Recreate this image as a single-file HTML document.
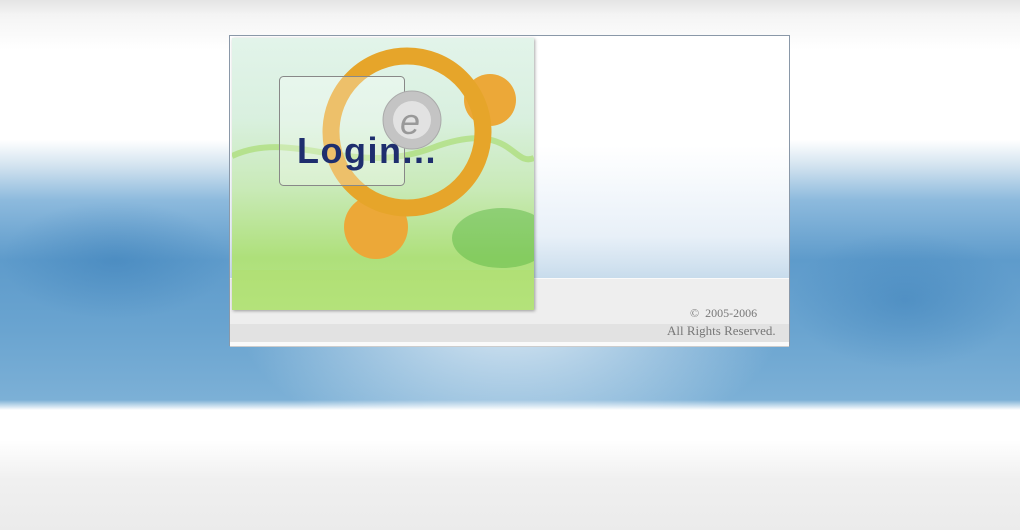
<!DOCTYPE html>
<html><head><style>
body{margin:0;width:1020px;height:530px;overflow:hidden;position:relative;font-family:"Liberation Serif",serif;
background:linear-gradient(180deg,#e4e4e4 0,#f4f4f4 15px,#fff 50px,#fff 140px,#d4e4f0 165px,#8dbadd 200px,#5e9bcb 260px,#6aa4d0 330px,#7cb0d6 400px,#fff 410px,#fff 440px,#f0f0f0 480px,#ebebeb 530px);}
.glow{position:absolute;left:230px;top:150px;width:560px;height:260px;background:radial-gradient(ellipse at 50% 60%,rgba(255,255,255,.8),rgba(255,255,255,0) 70%);}
.glowl{position:absolute;left:0;top:200px;width:230px;height:120px;background:radial-gradient(ellipse,rgba(50,120,180,.4),rgba(50,120,180,0) 70%);}
.glowr{position:absolute;left:790px;top:230px;width:230px;height:140px;background:radial-gradient(ellipse,rgba(50,120,180,.4),rgba(50,120,180,0) 70%);}
.panel{position:absolute;left:229px;top:35px;width:559px;height:310px;border:1px solid #8a98a8;border-bottom:none;
background:linear-gradient(180deg,#fff 0,#fff 110px,#e8f0f8 200px,#c8dcec 242px);}
.bar1{position:absolute;left:0;top:242px;width:559px;height:46px;background:#eeeeee;border-top:1px solid #fafafa}
.bar2{position:absolute;left:0;top:288px;width:559px;height:18px;background:#e2e2e2}
.bar3{position:absolute;left:0;top:306px;width:559px;height:4px;background:#fafafa;border-bottom:1px solid #ccc}
.img{position:absolute;left:2px;top:2px;width:302px;height:272px;overflow:hidden;box-shadow:1px 1px 3px rgba(0,0,0,.35);
background:linear-gradient(180deg,#e2f4ea 0,#d9f0df 80px,#c9eab8 150px,#aee07a 220px,#b8e68a 272px);}
.t1{position:absolute;left:460px;top:270px;font-size:12px;color:#777}
.t2{position:absolute;left:437px;top:287px;font-size:13px;color:#777}
</style></head><body>
<div class="glowl"></div><div class="glowr"></div><div class="glow"></div>
<div class="panel">
<div class="bar1"></div><div class="bar2"></div><div class="bar3"></div>
<div class="img">
<svg width="302" height="272">
<path d="M0 118 C60 90 120 140 200 110 S280 130 302 120" stroke="#9ad550" stroke-width="6" fill="none" opacity=".5"/>
<ellipse cx="270" cy="200" rx="50" ry="30" fill="#5cb845" opacity=".5"/>
<rect x="0" y="232" width="302" height="40" fill="#b0e070" opacity=".6"/>
<circle cx="258" cy="62" r="26" fill="#eca838"/>
<circle cx="144" cy="189" r="32" fill="#eca838"/>
<circle cx="175" cy="94" r="76" fill="none" stroke="#e6a52a" stroke-width="17"/>
<rect x="47.5" y="38.5" width="125" height="109" rx="4" fill="rgba(255,255,255,.3)" stroke="#888"/>
<circle cx="180" cy="82" r="29" fill="#c4c4c4" stroke="#aaa"/>
<circle cx="180" cy="82" r="19" fill="#e2e2e2"/>
<text x="168" y="96" font-family="Liberation Sans,sans-serif" font-size="36" font-style="italic" fill="#999">e</text>
<text x="65" y="125" font-family="Liberation Sans,sans-serif" font-weight="bold" font-size="36" letter-spacing="1.5" fill="#1e2e6e">Login...</text>
</svg>
</div>
<div class="t1">©&nbsp; 2005-2006</div>
<div class="t2">All Rights Reserved.</div>
</div>
</body></html>
